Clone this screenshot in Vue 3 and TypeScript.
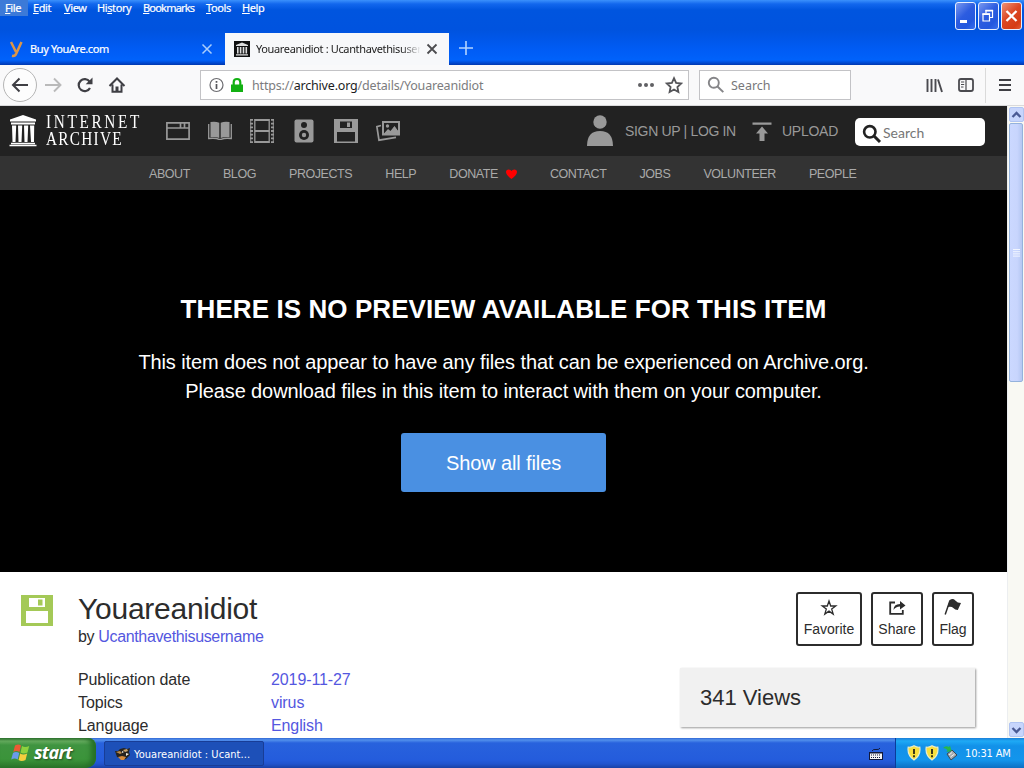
<script setup lang="ts">
interface MenuEntry { key: string; rest: string; before?: string; width: number; tight?: boolean }
const menus: MenuEntry[] = [
  { key: 'F', rest: 'ile', width: 28 },
  { key: 'E', rest: 'dit', width: 31 },
  { key: 'V', rest: 'iew', width: 33 },
  { before: 'Hi', key: 's', rest: 'tory', width: 46 },
  { key: 'B', rest: 'ookmarks', width: 63, tight: true },
  { key: 'T', rest: 'ools', width: 36 },
  { key: 'H', rest: 'elp', width: 36 },
]
const nav: string[] = ['ABOUT', 'BLOG', 'PROJECTS', 'HELP', 'DONATE', 'CONTACT', 'JOBS', 'VOLUNTEER', 'PEOPLE']
const details: { label: string; value: string }[] = [
  { label: 'Publication date', value: '2019-11-27' },
  { label: 'Topics', value: 'virus' },
  { label: 'Language', value: 'English' },
]
</script>

<template>
  <div class="desktop">
    <header class="titlebar">
      <div class="menus">
        <span v-for="(m, i) in menus" :key="i" class="menu" :class="{ on: i === 0, tight: m.tight }" :style="{ width: m.width + 'px' }">{{ m.before }}<u>{{ m.key }}</u>{{ m.rest }}</span>
      </div>
      <div class="tabs">
        <div class="tab idle">
          <svg class="fav" width="14" height="18" viewBox="0 0 14 18"><path d="M2 2 7 12M12.500 2 7.300 13.500Q6 16.500 3 15.800" fill="none" stroke="#dc9648" stroke-width="2.500" /></svg>
          <span class="tabtext">Buy YouAre.com</span>
          <svg class="cross" width="12" height="12" viewBox="0 0 12 12"><path d="M1.500 1.500l9 9M10.500 1.500l-9 9" stroke="#a9cdfb" stroke-width="1.500" /></svg>
        </div>
        <div class="tab active">
          <svg width="16" height="16" viewBox="0 0 16 16"><path fill="#111" d="M0 0h16v16H0z" /><path fill="#ddd" d="M2 4l6-2.500L14 4v1H2zM3 6h1.600v6.500H3zM5.800 6h1.600v6.500H5.800zM8.700 6h1.600v6.500H8.700zM11.500 6h1.600v6.500h-1.600zM2 13.200h12v1.300H2z" /></svg>
          <span class="tabtext">Youareanidiot : Ucanthavethisusername</span>
          <svg class="cross" width="12" height="12" viewBox="0 0 12 12"><path d="M1.500 1.500l9 9M10.500 1.500l-9 9" stroke="#4c4c50" stroke-width="1.800" /></svg>
        </div>
        <svg class="plus" width="14" height="14" viewBox="0 0 14 14"><path d="M7 0v14M0 7h14" stroke="#b2d4ff" stroke-width="1.600" /></svg>
      </div>
      <div class="winbtns">
        <span class="wb"><svg width="21" height="28" viewBox="0 0 21 28"><path d="M5 18h7v3H5z" fill="#fff" /></svg></span>
        <span class="wb"><svg width="21" height="28" viewBox="0 0 21 28"><path d="M8 11V8.500h6.500v7H12M5 12h6.500v7H5z" fill="none" stroke="#fff" stroke-width="1.200" /><path d="M7.400 8.700h7.700M4.400 12.200h7.700" stroke="#fff" stroke-width="1.800" /></svg></span>
        <span class="wb red"><svg width="21" height="28" viewBox="0 0 21 28"><path d="M5.500 9l10 10M15.500 9l-10 10" stroke="#fff" stroke-width="2.300" /></svg></span>
      </div>
    </header>

    <div class="toolbar">
      <svg class="navicons" width="130" height="40" viewBox="0 0 130 40">
        <circle cx="20" cy="20" r="16.500" fill="#fdfdfd" stroke="#b5b5b5" />
        <path d="M28 20H13.500M19.500 13.500 13 20l6.500 6.500" fill="none" stroke="#3f3f44" stroke-width="2" />
        <path d="M45 20h14.500M54 13.500 60.500 20 54 26.500" fill="none" stroke="#bababa" stroke-width="1.900" />
        <path d="M90 23a6 6 0 1 1-.4-6.300" fill="none" stroke="#3f3f44" stroke-width="2.200" /><path d="M92.500 12.500v6.800h-6.800z" fill="#3f3f44" />
        <path d="M109.500 21 117 13.500l7.500 7.500M112.500 19.500v7.200h9v-7.200" fill="none" stroke="#3f3f44" stroke-width="2" /><path d="M115.500 21.500h3v5.500h-3z" fill="#3f3f44" />
      </svg>
      <div class="url">
        <svg width="36" height="20" viewBox="0 0 36 20"><circle cx="8.500" cy="10" r="6.500" fill="none" stroke="#6c6c70" stroke-width="1.200" /><path d="M8.500 9v5M8.500 6v1.800" stroke="#55555a" stroke-width="1.700" /><path d="M23 9.500h12V17h-12z" fill="#12b012" /><path d="M25.700 10V7.200q0-3.200 3.300-3.200t3.300 3.200V10" fill="none" stroke="#12b012" stroke-width="2.200" /></svg>
        <span class="address">https://<b>archive.org</b>/details/Youareanidiot</span>
        <svg class="urlend" width="46" height="20" viewBox="0 0 46 20"><g fill="#606064"><circle cx="3" cy="10" r="2" /><circle cx="9" cy="10" r="2" /><circle cx="15" cy="10" r="2" /></g><path d="M37 3.200l2.100 4.700 5.100.6-3.800 3.500 1 5-4.400-2.500-4.400 2.500 1-5-3.800-3.500 5.100-.6z" fill="none" stroke="#555559" stroke-width="1.800" /></svg>
      </div>
      <div class="search">
        <svg width="18" height="18" viewBox="0 0 18 18"><circle cx="6.800" cy="6.800" r="5" fill="none" stroke="#858588" stroke-width="1.900" /><path d="M10.500 10.500l5.800 5.600" stroke="#858588" stroke-width="2" /></svg>
        <span>Search</span>
      </div>
      <svg class="right" width="98" height="40" viewBox="0 0 98 40">
        <path d="M2.500 14v13M6.500 14v13M10.500 14v13M13 14.500 17 27" stroke="#4a4a4f" stroke-width="1.900" fill="none" />
        <rect x="34" y="14" width="14" height="12" rx="2" fill="none" stroke="#4a4a4f" stroke-width="1.800" /><path d="M41 14v12M36 17h3.200M36 19.500h3.200M36 22h2.500" stroke="#4a4a4f" stroke-width="1.200" />
        <path d="M60.500 3v35" stroke="#dadada" /><path d="M74 15h12M74 20h12M74 25h12" stroke="#3f3f44" stroke-width="2" />
      </svg>
    </div>

    <main class="viewport">
      <div class="page">
        <div class="iabar">
          <svg class="pillars" width="28" height="32" viewBox="0 0 28 32"><path fill="#fff" d="M1 4.500 14 0l13 4.500v2H1zM2 7.500h24v2H2zM3 10.500h4.200L6.500 27h-3zM9 10.500h4.200L12.500 27h-3zM15 10.500h4.200L18.500 27h-3zM21 10.500h4.200L25 27h-3zM2 27.700h24v1.500H2zM.5 29.700h27v1.600H.5z" /></svg>
          <div class="wordmark"><span class="w1">INTERNET</span><span class="w2">ARCHIVE</span></div>
          <div class="media">
            <svg width="24" height="28" viewBox="0 0 24 28"><g fill="none" stroke="#999" stroke-width="1.700"><path d="M.9 5.900h22.200v16.200H.9zM1 11h22M14.500 6v4.500M18.500 6v4.500" /></g></svg>
            <svg width="24" height="28" viewBox="0 0 24 28"><path d="M2.500 5q5-1 8.800.8V21q-4-1.500-8.800-.8zM21.500 5q-5-1-8.800.8V21q4-1.500 8.800-.8z" fill="#999" /><path d="M.7 7v14.500q7-.8 10.300.8h2q4-1.600 10.300-.8V7" fill="none" stroke="#999" stroke-width="1.300" /></svg>
            <svg width="24" height="28" viewBox="0 0 24 28"><path d="M4.800 2v24M19.200 2v24" stroke="#999" stroke-width="1.300" /><path d="M4.800 3h14.400M4.800 14h14.400M4.800 25h14.400" stroke="#999" stroke-width="1.900" /><path d="M1.500 2v24M22.500 2v24" stroke="#999" stroke-width="3" stroke-dasharray="1.800 1.900" /><path d="M.7 2v24M23.300 2v24" stroke="#999" stroke-width=".9" /></svg>
            <svg width="24" height="28" viewBox="0 0 24 28"><rect x="2.500" y="2.500" width="19" height="23" rx="2" fill="#999" /><circle cx="12" cy="8" r="3" fill="#222" /><circle cx="12" cy="18" r="5" fill="#222" /><circle cx="12" cy="18" r="2.200" fill="#999" /></svg>
            <svg width="24" height="28" viewBox="0 0 24 28"><path fill="#999" fill-rule="evenodd" d="M0 2h24v24H0zM6 4.500v6.500h12V4.500zM3 15v9.500h18V15z" /><path fill="#999" d="M13 5.500h3v4.500h-3z" /></svg>
            <svg width="24" height="28" viewBox="0 0 24 28"><path fill="#999" fill-rule="evenodd" d="M6 4h18v14.500H6zM8 6v10.500l4-4.500 2.500 2 4-5 3.500 5V6z" /><circle cx="11.500" cy="9" r="1.700" fill="#999" /><path fill="#999" d="M8 17l4-4 2.500 2 4-5.500L22 14v3z" /><path d="M5 8.500.9 9.700 3 23.200l17-2.900" fill="none" stroke="#999" stroke-width="1.700" /></svg>
          </div>
          <svg class="person" width="28" height="32" viewBox="0 0 28 32"><circle cx="14" cy="7" r="6.700" fill="#999" /><path d="M1 31q0-15 13-15t13 15z" fill="#999" /></svg>
          <span class="sign">SIGN UP | LOG IN</span>
          <svg class="up" width="20" height="20" viewBox="0 0 20 20"><path d="M.5.500h19v2.200H.5zM10 4.500l6 7h-3.500V19h-5v-7.500H4z" fill="#999" /></svg>
          <span class="upload">UPLOAD</span>
          <div class="iasearch"><svg width="20" height="20" viewBox="0 0 20 20"><circle cx="7.800" cy="7.800" r="5.700" fill="none" stroke="#222" stroke-width="2.600" /><path d="M12 12l6 6" stroke="#222" stroke-width="3" /></svg><span>Search</span></div>
        </div>
        <nav class="ianav">
          <span v-for="n in nav" :key="n">{{ n }}<svg v-if="n === 'DONATE'" class="heart" width="11" height="10" viewBox="0 0 11 10"><path d="M5.500 10Q0 6 0 3 0 .4 2.700.4 4.700.4 5.500 2 6.300.4 8.300.4 11 .4 11 3q0 3-5.500 7z" fill="#f00" /></svg></span>
        </nav>
        <section class="theatre">
          <h1>THERE IS NO PREVIEW AVAILABLE FOR THIS ITEM</h1>
          <p class="l1">This item does not appear to have any files that can be experienced on Archive.org.</p>
          <p class="l2">Please download files in this item to interact with them on your computer.</p>
          <button>Show all files</button>
        </section>
        <section class="item">
          <svg class="disk" width="32" height="32" viewBox="0 0 32 32"><path fill="#a4c957" d="M0 0h32v31H0z" /><path fill="#fff" fill-rule="evenodd" d="M8 3h16v9H8zM17 4.500v6h4.500v-6zM5 16h22v12H5z" /></svg>
          <div class="info">
            <h2>Youareanidiot</h2>
            <div class="by">by <a>Ucanthavethisusername</a></div>
            <dl><div v-for="d in details" :key="d.label"><dt>{{ d.label }}</dt><dd>{{ d.value }}</dd></div></dl>
          </div>
          <aside>
            <div class="actions">
              <span class="act fa"><svg width="18" height="18" viewBox="0 0 18 18"><path d="M9 2l1.700 5h5.100l-4.100 3.100 1.500 5L9 12.100l-4.200 3 1.500-5L2.200 7h5.100z" fill="none" stroke="#2c2c2c" stroke-width="1.300" /></svg>Favorite</span>
              <span class="act sh"><svg width="18" height="18" viewBox="0 0 18 18"><path d="M7 3.500H2.200v11.300h12.600V11" fill="none" stroke="#2c2c2c" stroke-width="1.800" /><path d="M5.500 11q0-6 6.500-6V2l5.500 4.500L12 10.500v-3q-4.500 0-6.500 3.500z" fill="#2c2c2c" /></svg>Share</span>
              <span class="act fl"><svg width="18" height="18" viewBox="0 0 18 18"><path d="M6 1.500 1.200 15.500" stroke="#2c2c2c" stroke-width="1.500" /><path d="M5.800 1Q9-1 11.300 1.500 13.500 4 17 4l-3.200 7q-2.800 0-4.500-2T3.500 8z" fill="#2c2c2c" /></svg>Flag</span>
            </div>
            <div class="views">341 Views</div>
          </aside>
        </section>
      </div>
      <div class="scroll">
        <span class="sb"><svg width="13" height="14" viewBox="0 0 13 14"><path d="M2.500 9l4-4 4 4" fill="none" stroke="#4a5a94" stroke-width="2.300" /></svg></span>
        <span class="thumb"><svg width="7" height="8" viewBox="0 0 7 8"><path d="M0 .5h7M0 2.700h7M0 4.900h7M0 7.100h7" stroke="#f1f5ff" /></svg></span>
        <span class="sb end"><svg width="13" height="14" viewBox="0 0 13 14"><path d="M2.500 5l4 4 4-4" fill="none" stroke="#4a5a94" stroke-width="2.300" /></svg></span>
      </div>
    </main>

    <footer class="taskbar">
      <div class="start">
        <svg width="20" height="20" viewBox="0 0 20 20"><path d="M4 2.500q3.500-2 6 0L8.500 9q-3-2-6.200 0z" fill="#ec5a34" /><path d="M11 3q3 2 7.200 0L16.500 9.500q-4 2-7 0z" fill="#8cd13e" /><path d="M2 10q3-2 6.200 0L6.700 16.500q-3-2-6.500 0z" fill="#6a9bea" /><path d="M9.200 10.500q3 2 7 0L14.500 17q-4 2-7 0z" fill="#f5ce3e" /></svg>
        <span>start</span>
      </div>
      <div class="task">
        <svg width="16" height="16" viewBox="0 0 16 16"><path d="M0 5l3 0 2-2 4-1 3 1 3-1-1 4 1 3-4 4-4 1-1-2-4-1z" fill="#26231f" /><path d="M1 6l4-1 2 2-2 1z" fill="#b98a4a" /><path d="M8 4l4-1 1 2-3 1z" fill="#c9a36a" /><path d="M3 11l4-1 4 1-2 3-3 0z" fill="#d58b3c" /><path d="M7 5l2 1-2 1zM11 7l3 1-3 2z" fill="#f4eee0" /></svg>
        <span>Youareanidiot : Ucant...</span>
      </div>
      <svg class="kbd" width="14" height="12" viewBox="0 0 14 12"><path d="M3 3q1-2 4-1.500T11 0" fill="none" stroke="#101a3c" /><path d="M0 4h14v8H0z" fill="#10183a" /><path d="M1 5.500h12v5.500H1z" fill="#f4f4f4" /><path d="M2 7h10M2 9.500h10" stroke="#10183a" stroke-width="1" stroke-dasharray="1 1" /></svg>
      <div class="tray">
        <svg v-for="n in 2" :key="n" class="shield" width="14" height="16" viewBox="0 0 14 16"><path d="M7 .8q3 1.700 5.800 1.400Q14 10.500 7 15 0 10.500 1.200 2.200 4 2.500 7 .8z" fill="#f8df3c" stroke="#e8edcb" stroke-width="1.200" /><path d="M7 4v5M7 10.300v2" stroke="#333018" stroke-width="1.900" /></svg>
        <svg class="usb" width="14" height="16" viewBox="0 0 14 16"><path d="M4 9l5-4 5 5-6 5z" fill="#a6adb0" stroke="#384855" /><path d="M6 10l3-2.500M7.500 12l4-3" stroke="#eee" /><path d="M0 3q3-3 6-1l1-1.500 1.500 5.500-5 1 1-2q-2-2-4.500-2z" fill="#27b84a" /></svg>
        <span class="clock">10:31 AM</span>
      </div>
    </footer>
  </div>
</template>

<style>
html, body { margin: 0; overflow: hidden; }
</style>
<style scoped>
* { box-sizing: border-box; }
svg { display: block; flex: none; }
.desktop { width: 1024px; height: 768px; display: flex; flex-direction: column; overflow: hidden; background: #fff; font-family: "Liberation Sans", Arial, sans-serif; }
.titlebar { position: relative; height: 65px; flex: none; background: linear-gradient(#3b91fc 0, #1267ed 4px, #0055df 10px, #0053df 30px, #005cf5 50px, #0062fb 60px, #003fc0 64px, #0038ad 65px); font-family: "Noto Sans", sans-serif; color: #fff; }
.menus { display: flex; height: 17px; font-size: 11px; line-height: 16px; letter-spacing: -.4px; white-space: nowrap; -webkit-text-stroke: .2px #fff; }
.menu { padding-left: 5px; height: 16px; }
.menu.tight { letter-spacing: -.8px; }
.menu.on { background: #3c7ad8; }
.menu u { text-underline-offset: 1px; }
.tabs { display: flex; height: 32px; margin-top: 16px; }
.tab { display: flex; align-items: center; font-size: 11px; white-space: nowrap; }
.tabtext { padding-bottom: 2px; }
.tab.idle { width: 225px; padding-left: 9px; }
.fav { margin-top: -1px; }
.idle .tabtext { margin-left: 7px; width: 171px; letter-spacing: -.38px; -webkit-text-stroke: .2px #fff; }
.tab.active { width: 224px; padding-left: 9px; background: #f7f8fa; color: #222; }
.active .tabtext { margin-left: 6px; width: 165px; overflow: hidden; letter-spacing: -.36px; -webkit-mask-image: linear-gradient(90deg, #000 145px, transparent 165px); }
.active .cross { margin-left: 5px; }
.plus { margin: 8px 0 0 10px; }
.winbtns { position: absolute; right: 2px; top: 2px; display: flex; gap: 2px; }
.wb { width: 21px; height: 28px; display: flex; border: 1px solid #e8f0ff; border-radius: 3px; background: linear-gradient(135deg, #7998ef, #2c5ce0 45%, #2358de 75%, #3870ee); }
.wb svg { margin: -1px; }
.wb.red { background: linear-gradient(135deg, #ee9276, #dc4824 45%, #d53c15 80%, #e45d34); }
.toolbar { height: 41px; flex: none; display: flex; background: #f9f9fa; border-bottom: 1px solid #d9d9db; font: 13px "Noto Sans", sans-serif; }
.url { margin: 5px 0 0 70px; height: 30px; width: 489px; border: 1px solid #c3c3c6; background: #fff; display: flex; align-items: center; padding-left: 7px; }
.address { margin-left: 8px; color: #7c7c7e; font-size: 12.5px; letter-spacing: -.18px; white-space: nowrap; }
.address b { font-weight: 400; color: #1c1c1e; }
.urlend { margin: 0 5px 0 auto; }
.search { margin: 5px 0 0 10px; width: 152px; height: 30px; border: 1px solid #c3c3c6; background: #fff; display: flex; align-items: center; padding-left: 7px; color: #77777a; font-size: 12.5px; }
.search span { margin-left: 6px; }
.right { margin-left: 74px; }
.viewport { height: 632px; flex: none; display: flex; }
.page { width: 1007px; overflow: hidden; background: #fff; }
.iabar { height: 50px; background: #222; display: flex; align-items: center; color: #999; }
.pillars { margin-left: 9px; }
.wordmark { margin-left: 9px; width: 100px; display: flex; flex-direction: column; color: #fff; font: 18px/17px "Liberation Serif", serif; white-space: nowrap; }
.wordmark span { transform: scaleX(.85); transform-origin: left; }
.w1 { letter-spacing: 3.100px; }
.w2 { letter-spacing: 1.500px; }
.media { margin-left: 20px; display: flex; gap: 18px; }
.person { margin-left: 186px; }
.sign { margin-left: 11px; width: 127px; font-size: 14px; letter-spacing: -.33px; white-space: nowrap; }
.up { margin-top: 2px; }
.upload { margin-left: 10px; width: 73px; font-size: 14px; letter-spacing: -.25px; }
.iasearch { width: 130px; height: 28px; margin-top: 2px; border-radius: 5px; background: #fff; display: flex; align-items: center; font: 14px Lato, sans-serif; color: #767676; padding-left: 7px; }
.iasearch svg { margin-top: 4px; }
.iasearch span { margin-left: 1px; }
.ianav { height: 34px; padding: 2px 0 0 149px; background: #333; display: flex; gap: 33.100px; align-items: center; font-size: 12.5px; letter-spacing: -.44px; color: #aaa; }
.ianav span { display: flex; align-items: center; }
.heart { margin-left: 8px; }
.theatre { height: 382px; padding-top: 103px; background: #000; color: #fff; text-align: center; white-space: nowrap; }
.theatre h1 { margin: 0; font-size: 26px; line-height: 32px; letter-spacing: .08px; }
.theatre p { margin: 0; font-size: 20px; line-height: 29px; letter-spacing: -.11px; }
.theatre .l1 { margin-top: 23px; }
.theatre button { display: block; margin: 27px auto 0; padding: 2px 0 0; width: 205px; height: 59px; border: 0; border-radius: 3px; background: #4a90e2; color: #fff; font: 20px "Liberation Sans", Arial, sans-serif; letter-spacing: -.11px; }
.item { display: flex; height: 166px; color: #2c2c2c; }
.disk { margin: 23px 0 0 21px; }
.info { margin-left: 25px; padding-top: 19px; width: 602px; font-size: 16px; letter-spacing: -.1px; }
.info h2 { margin: 0; font-size: 30px; line-height: 36px; font-weight: 400; letter-spacing: -.25px; }
.by { line-height: 20px; letter-spacing: -.35px; }
.by a, dd { color: #5457e0; }
dl { margin: 21px 0 0; line-height: 23px; }
dl div { display: flex; }
dt { width: 193px; }
dd { margin: 0; }
aside { width: 295px; padding-top: 20px; }
.actions { display: flex; justify-content: flex-end; gap: 9px; padding-right: 1px; }
.act { height: 54px; border: 2px solid #2c2c2c; border-radius: 3px; display: flex; flex-direction: column; align-items: center; padding-top: 5px; font-size: 14px; line-height: 24px; }
.fa { width: 66px; } .sh { width: 52px; } .fl { width: 42px; }
.views { margin-top: 22px; height: 59px; background: #f1f1f1; box-shadow: 1px 1px 2px 0 #999; padding-left: 20px; font-size: 22px; line-height: 59px; }
.scroll { width: 17px; background: #f9f9f3; display: flex; flex-direction: column; align-items: center; padding: 1px 0; border-left: 1px solid #eceef0; }
.sb { width: 15px; height: 15px; border: 1px solid #b0c4f2; border-radius: 2px; background: #c7d5fc; }
.thumb { margin-top: 1px; width: 14px; height: 259px; border: 1px solid #94b2dc; border-radius: 2px; background: linear-gradient(90deg, #cbd8ff, #c8d5fd 60%, #b5c7f2); display: flex; align-items: center; justify-content: center; }
.end { margin-top: auto; }
.taskbar { height: 30px; flex: none; display: flex; background: linear-gradient(#3168d5, #5290ec 2px, #2862dd 5px, #245cdc 22px, #2154cd 26px, #1941a5); color: #fff; font: 11px "DejaVu Sans Condensed", "DejaVu Sans", sans-serif; }
.start { width: 96px; height: 30px; border-radius: 0 8px 10px 0; display: flex; align-items: center; padding-left: 11px; background: linear-gradient(#347334, #68ae61 3px, #3f9440 7px, #3b943a 21px, #2b762a); box-shadow: inset -5px 0 5px #267027; }
.start span { margin: -3px 0 0 3px; font: italic bold 18px "Open Sans", sans-serif; letter-spacing: -.7px; text-shadow: 1px 1px 2px #234d22; }
.task { margin: 3px 0 0 8px; width: 160px; height: 25px; border: 1px solid #183d96; border-radius: 2px; background: #1d50b8; display: flex; align-items: center; padding-left: 10px; white-space: nowrap; }
.task span { margin: 1px 0 0 3px; letter-spacing: .05px; }
.kbd { margin: 10px 0 0 605px; }
.tray { margin-left: auto; width: 129px; background: linear-gradient(#1d7ed8, #1eaaf5 3px, #1291e9 8px, #1395ec 22px, #0d6fc2); border-left: 1px solid #0a3c9a; display: flex; align-items: center; padding-left: 11px; }
.shield + .shield { margin-left: 4px; }
.usb { margin-left: 4px; }
.clock { margin-left: 8px; white-space: nowrap; letter-spacing: -.15px; }
</style>
